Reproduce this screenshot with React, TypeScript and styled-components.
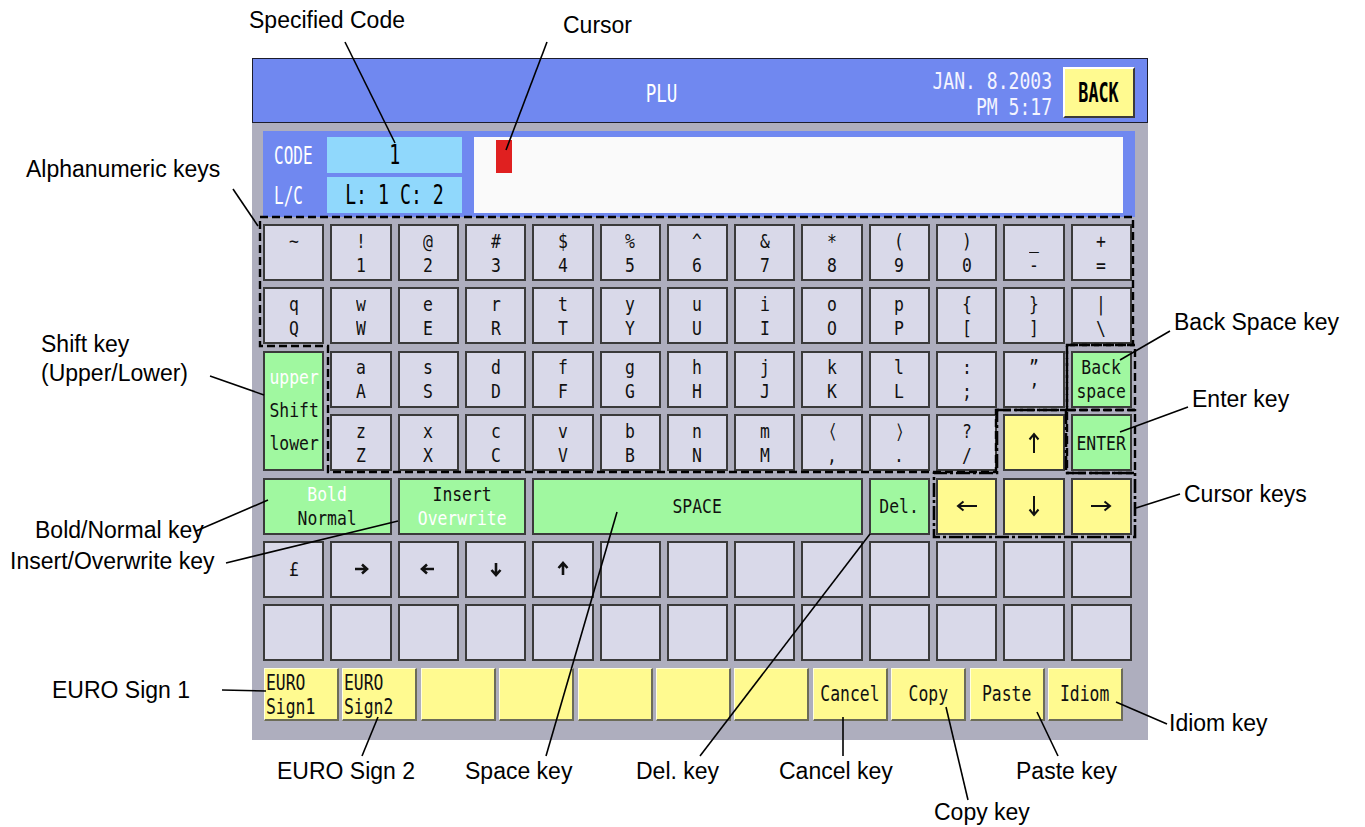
import React from "react";
import styled, { createGlobalStyle } from "styled-components";

const GlobalStyle = createGlobalStyle`
  html, body {
    margin: 0;
    padding: 0;
    background: #ffffff;
  }
  body {
    font-family: "Liberation Sans", Arial, sans-serif;
  }
`;

type Tone = "plain" | "green" | "yellow";
type Dir = "left" | "right" | "up" | "down";

const toneColor: Record<Tone, string> = {
  plain: "#d9d9e9",
  green: "#a0f8a0",
  yellow: "#fffa90",
};

const dirAngle: Record<Dir, number> = {
  right: 0,
  down: 90,
  left: 180,
  up: 270,
};

const screenFont = `"DejaVu Sans Mono", "Liberation Mono", monospace`;

const Page = styled.div`
  position: relative;
  width: 1365px;
  height: 827px;
  padding: 58px 0 0 252px;
  box-sizing: border-box;
  overflow: hidden;
`;

const Panel = styled.div`
  width: 896px;
  height: 682px;
  background: #aeaebe;
  display: flex;
  flex-direction: column;
`;

const Header = styled.div`
  height: 65px;
  box-sizing: border-box;
  background: #7088f0;
  border: 1px solid #1c1c2c;
  display: flex;
  align-items: flex-start;
  padding-right: 12px;
  font-family: ${screenFont};
  color: #ffffff;
`;

const Title = styled.div`
  margin: 20px 0 0 386px;
  font-size: 25px;
  line-height: 30px;
  transform: scaleX(0.7);
`;

const Spacer = styled.div`
  flex: 1;
`;

const DateBlock = styled.div`
  margin: 9px 11px 0 0;
  text-align: right;
  font-size: 21px;
  line-height: 24px;
  font-weight: 300;
  color: #f4f4ff;
  transform: scale(0.86, 1.1);
  transform-origin: right top;
`;

const BackButton = styled.div`
  margin-top: 8px;
  width: 72px;
  height: 51px;
  box-sizing: border-box;
  background: #fffa90;
  border: 2px solid;
  border-color: #ffffff #3a3a3a #3a3a3a #ffffff;
  display: flex;
  align-items: center;
  justify-content: center;
  color: #000;
  font-size: 27px;
  font-weight: bold;
  span {
    display: inline-block;
    transform: scaleX(0.62);
  }
`;

const InfoBox = styled.div`
  margin: 8px 13px 0 11px;
  height: 86px;
  box-sizing: border-box;
  background: #7088f0;
  padding: 6px 12px 4px 0;
  display: grid;
  grid-template-columns: 64px 135px 1fr;
  grid-template-rows: 36px 36px;
  row-gap: 4px;
  font-family: ${screenFont};
`;

const InfoLabel = styled.div`
  padding-left: 11px;
  display: flex;
  align-items: center;
  color: #ffffff;
  font-size: 25px;
  span {
    display: inline-block;
    transform: scaleX(0.64);
    transform-origin: left center;
  }
`;

const InfoField = styled.div`
  background: #90d8fc;
  display: flex;
  align-items: center;
  justify-content: center;
  color: #000;
  font-size: 26px;
  span {
    display: inline-block;
    transform: scaleX(0.7);
    white-space: pre;
  }
`;

const TextArea = styled.div`
  grid-column: 3;
  grid-row: 1 / 3;
  margin-left: 12px;
  background: #fafafa;
  padding: 3px 0 0 22px;
`;

const Cursor = styled.div`
  width: 16px;
  height: 33px;
  background: #e02020;
`;

const Keyboard = styled.div`
  margin: 7px 16px 0 11px;
  display: grid;
  grid-template-columns: repeat(13, minmax(0, 1fr));
  grid-auto-rows: 57px;
  gap: 6.4px 6px;
  font-family: ${screenFont};
`;

const Key = styled.div<{ $tone: Tone; $span?: number; $rows?: number }>`
  grid-column: span ${(p) => p.$span ?? 1};
  grid-row: span ${(p) => p.$rows ?? 1};
  background: ${(p) => toneColor[p.$tone]};
  border: 2px solid #3a3a3a;
  box-sizing: border-box;
  display: flex;
  flex-direction: column;
  align-items: center;
  justify-content: center;
  color: #111;
  font-size: 20px;
  overflow: hidden;
`;

const Line = styled.span<{ $light?: boolean; $gap?: number }>`
  display: block;
  height: ${(p) => p.$gap ?? 24}px;
  line-height: ${(p) => p.$gap ?? 24}px;
  white-space: pre;
  color: ${(p) => (p.$light ? "#ffffff" : "#111111")};
  transform: scaleX(0.82);
`;

const ArrowIcon = styled.svg<{ $dir: Dir }>`
  display: block;
  transform: rotate(${(p) => dirAngle[p.$dir]}deg);
`;

const SoftRow = styled.div`
  margin: 7px 25px 0 12px;
  height: 53px;
  display: grid;
  grid-template-columns: repeat(11, minmax(0, 1fr));
  gap: 3.5px;
  font-family: ${screenFont};
`;

const SoftKey = styled.div<{ $corner?: boolean }>`
  background: #fffa90;
  border-style: solid;
  border-width: 1px 2px 2px 1px;
  border-color: #ffffe0 #6c6c58 #6c6c58 #ffffe0;
  box-sizing: border-box;
  display: flex;
  flex-direction: column;
  align-items: ${(p) => (p.$corner ? "flex-start" : "center")};
  justify-content: ${(p) => (p.$corner ? "flex-start" : "center")};
  padding: ${(p) => (p.$corner ? "2px 0 0 1px" : "0")};
  color: #111;
  font-size: 21px;
  overflow: hidden;
  span {
    display: block;
    line-height: 24px;
    transform: scaleX(0.78);
    transform-origin: ${(p) => (p.$corner ? "left center" : "center")};
    white-space: pre;
  }
`;

const Callout = styled.div<{ $x: number; $y: number }>`
  position: absolute;
  left: ${(p) => p.$x}px;
  top: ${(p) => p.$y}px;
  font-family: "Liberation Sans", Arial, sans-serif;
  font-size: 23px;
  line-height: 29px;
  color: #000;
  white-space: nowrap;
`;

const Overlay = styled.svg`
  position: absolute;
  left: 0;
  top: 0;
  pointer-events: none;
`;

function Arrow({ dir, long }: { dir: Dir; long?: boolean }) {
  return long ? (
    <ArrowIcon $dir={dir} width={24} height={24} viewBox="0 0 24 24">
      <path
        d="M2 12 H21 M15.5 7.5 L21 12 L15.5 16.5"
        fill="none"
        stroke="#111"
        strokeWidth={2}
      />
    </ArrowIcon>
  ) : (
    <ArrowIcon $dir={dir} width={18} height={18} viewBox="0 0 18 18">
      <path
        d="M3 9 H15 M10 4.5 L15 9 L10 13.5"
        fill="none"
        stroke="#111"
        strokeWidth={2.6}
      />
    </ArrowIcon>
  );
}

type KeyDef = {
  lines?: { t: string; light?: boolean }[];
  arrow?: Dir;
  long?: boolean;
  tone?: Tone;
  span?: number;
  rows?: number;
  gap?: number;
};

const pair = (a: string, b: string): KeyDef => ({
  lines: [{ t: a }, { t: b }],
});
const single = (t: string, tone: Tone = "plain", span = 1): KeyDef => ({
  lines: [{ t }],
  tone,
  span,
});
const arrow = (dir: Dir, long = false): KeyDef => ({
  arrow: dir,
  long,
  tone: long ? "yellow" : "plain",
});
const blank = (): KeyDef => ({});

const keys: KeyDef[] = [
  pair("~", " "),
  pair("!", "1"),
  pair("@", "2"),
  pair("#", "3"),
  pair("$", "4"),
  pair("%", "5"),
  pair("^", "6"),
  pair("&", "7"),
  pair("*", "8"),
  pair("(", "9"),
  pair(")", "0"),
  pair("_", "-"),
  pair("+", "="),

  pair("q", "Q"),
  pair("w", "W"),
  pair("e", "E"),
  pair("r", "R"),
  pair("t", "T"),
  pair("y", "Y"),
  pair("u", "U"),
  pair("i", "I"),
  pair("o", "O"),
  pair("p", "P"),
  pair("{", "["),
  pair("}", "]"),
  pair("|", "\\"),

  {
    lines: [{ t: "upper", light: true }, { t: "Shift" }, { t: "lower" }],
    tone: "green",
    rows: 2,
    gap: 33,
  },
  pair("a", "A"),
  pair("s", "S"),
  pair("d", "D"),
  pair("f", "F"),
  pair("g", "G"),
  pair("h", "H"),
  pair("j", "J"),
  pair("k", "K"),
  pair("l", "L"),
  pair(":", ";"),
  pair("\u201D", "\u2019"),
  { lines: [{ t: "Back" }, { t: "space" }], tone: "green" },

  pair("z", "Z"),
  pair("x", "X"),
  pair("c", "C"),
  pair("v", "V"),
  pair("b", "B"),
  pair("n", "N"),
  pair("m", "M"),
  pair("\u2329", ","),
  pair("\u232A", "."),
  pair("?", "/"),
  arrow("up", true),
  single("ENTER", "green"),

  {
    lines: [{ t: "Bold", light: true }, { t: "Normal" }],
    tone: "green",
    span: 2,
  },
  {
    lines: [{ t: "Insert" }, { t: "Overwrite", light: true }],
    tone: "green",
    span: 2,
  },
  single("SPACE", "green", 5),
  single("Del.", "green"),
  arrow("left", true),
  arrow("down", true),
  arrow("right", true),

  single("\u00A3"),
  arrow("right"),
  arrow("left"),
  arrow("down"),
  arrow("up"),
  ...Array.from({ length: 8 }, blank),
  ...Array.from({ length: 13 }, blank),
];

const softKeys: { lines: string[]; corner?: boolean }[] = [
  { lines: ["EURO", "Sign1"], corner: true },
  { lines: ["EURO", "Sign2"], corner: true },
  { lines: [] },
  { lines: [] },
  { lines: [] },
  { lines: [] },
  { lines: [] },
  { lines: ["Cancel"] },
  { lines: ["Copy"] },
  { lines: ["Paste"] },
  { lines: ["Idiom"] },
];

const callouts: { x: number; y: number; text: string }[] = [
  { x: 249, y: 6, text: "Specified Code" },
  { x: 563, y: 11, text: "Cursor" },
  { x: 26, y: 155, text: "Alphanumeric keys" },
  { x: 41, y: 330, text: "Shift key" },
  { x: 41, y: 359, text: "(Upper/Lower)" },
  { x: 1174, y: 308, text: "Back Space key" },
  { x: 1192, y: 385, text: "Enter key" },
  { x: 1184, y: 480, text: "Cursor keys" },
  { x: 35, y: 516, text: "Bold/Normal key" },
  { x: 10, y: 547, text: "Insert/Overwrite key" },
  { x: 52, y: 676, text: "EURO Sign 1" },
  { x: 1169, y: 709, text: "Idiom key" },
  { x: 277, y: 757, text: "EURO Sign 2" },
  { x: 465, y: 757, text: "Space key" },
  { x: 636, y: 757, text: "Del. key" },
  { x: 779, y: 757, text: "Cancel key" },
  { x: 1016, y: 757, text: "Paste key" },
  { x: 934, y: 798, text: "Copy key" },
];

const leaders: [number, number, number, number][] = [
  [345, 42, 395, 143],
  [547, 42, 506, 150],
  [233, 189, 258, 226],
  [210, 376, 264, 395],
  [1170, 331, 1120, 360],
  [1188, 407, 1120, 432],
  [1180, 494, 1136, 508],
  [196, 531, 268, 500],
  [226, 563, 398, 521],
  [222, 690, 266, 691],
  [1167, 724, 1116, 702],
  [362, 756, 378, 717],
  [546, 756, 617, 512],
  [700, 756, 870, 534],
  [843, 756, 843, 717],
  [968, 800, 946, 707],
  [1058, 756, 1037, 712],
];

function Annotations() {
  return (
    <Overlay width={1365} height={827} viewBox="0 0 1365 827">
      <g fill="none" stroke="#000" strokeWidth={2.4} strokeDasharray="8 4">
        <path d="M260 217 H1133 V345 H1067 V410 H996 V472 H328 V346 H260 Z" />
        <path d="M1067 345 H1135 V410 H1067 Z" />
        <path d="M1067 410 H1135 V473 H1067 Z" />
      </g>
      <path
        d="M997 410 H1066 V473 H1135 V537 H934 V473 H997 Z"
        fill="none"
        stroke="#000"
        strokeWidth={2.6}
        strokeDasharray="14 3 3 3"
      />
      <g stroke="#000" strokeWidth={1.6}>
        {leaders.map(([x1, y1, x2, y2], i) => (
          <line key={i} x1={x1} y1={y1} x2={x2} y2={y2} />
        ))}
      </g>
    </Overlay>
  );
}

export default function App() {
  return (
    <>
      <GlobalStyle />
      <Page>
        <Panel>
          <Header>
            <Title>PLU</Title>
            <Spacer />
            <DateBlock>
              <div>JAN. 8.2003</div>
              <div>PM 5:17</div>
            </DateBlock>
            <BackButton>
              <span>BACK</span>
            </BackButton>
          </Header>

          <InfoBox>
            <InfoLabel>
              <span>CODE</span>
            </InfoLabel>
            <InfoField>
              <span>1</span>
            </InfoField>
            <TextArea>
              <Cursor />
            </TextArea>
            <InfoLabel>
              <span>L/C</span>
            </InfoLabel>
            <InfoField>
              <span>L: 1 C: 2</span>
            </InfoField>
          </InfoBox>

          <Keyboard>
            {keys.map((k, i) => (
              <Key key={i} $tone={k.tone ?? "plain"} $span={k.span} $rows={k.rows}>
                {k.arrow && <Arrow dir={k.arrow} long={k.long} />}
                {k.lines?.map((l, j) => (
                  <Line key={j} $light={l.light} $gap={k.gap}>
                    {l.t}
                  </Line>
                ))}
              </Key>
            ))}
          </Keyboard>

          <SoftRow>
            {softKeys.map((k, i) => (
              <SoftKey key={i} $corner={k.corner}>
                {k.lines.map((t, j) => (
                  <span key={j}>{t}</span>
                ))}
              </SoftKey>
            ))}
          </SoftRow>
        </Panel>

        {callouts.map((c) => (
          <Callout key={c.text} $x={c.x} $y={c.y}>
            {c.text}
          </Callout>
        ))}
        <Annotations />
      </Page>
    </>
  );
}
